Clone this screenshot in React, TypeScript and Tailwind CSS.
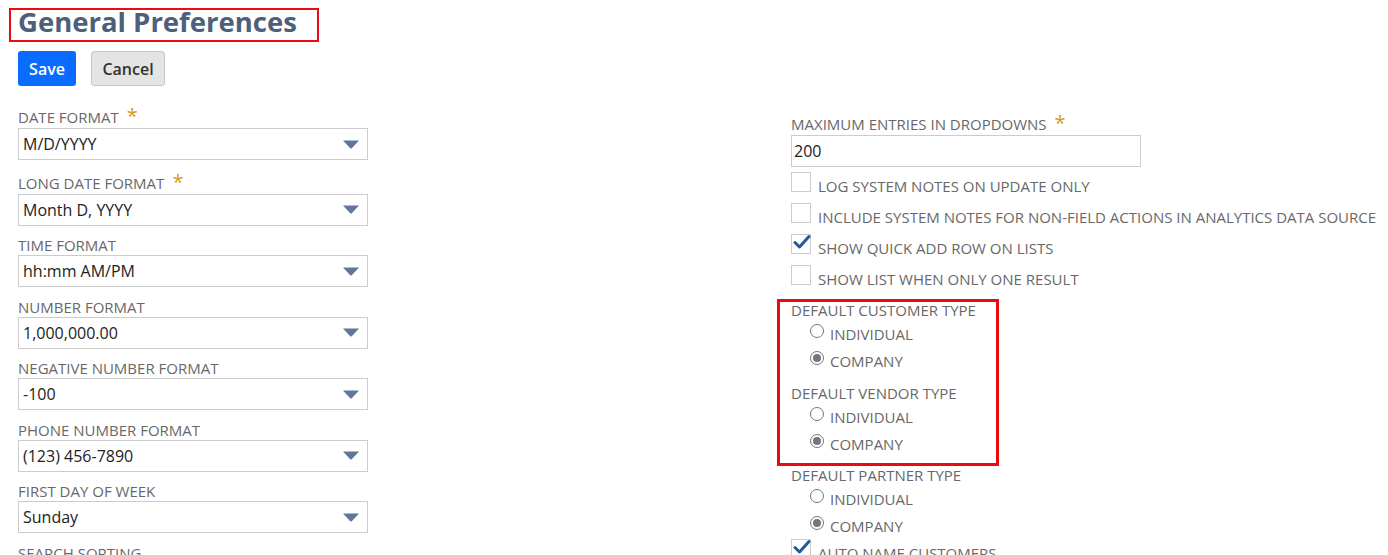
import React from "react";

const leftFields = [
  { label: "DATE FORMAT", value: "M/D/YYYY", required: true },
  { label: "LONG DATE FORMAT", value: "Month D, YYYY", required: true },
  { label: "TIME FORMAT", value: "hh:mm AM/PM" },
  { label: "NUMBER FORMAT", value: "1,000,000.00" },
  { label: "NEGATIVE NUMBER FORMAT", value: "-100" },
  { label: "PHONE NUMBER FORMAT", value: "(123) 456-7890" },
  { label: "FIRST DAY OF WEEK", value: "Sunday" },
];

function Label({ text, required }: { text: string; required?: boolean }) {
  return (
    <div
      className={
        "flex items-start whitespace-nowrap text-[15px] leading-[20px] text-[#686868] " +
        (required ? "h-[24px] pt-[3px]" : "h-[20px]")
      }
    >
      <span>{text}</span>
      {required && (
        <span className="ml-[8px] mt-[-1px] text-[20px] leading-[20px] text-[#d49a1a]">*</span>
      )}
    </div>
  );
}

function SelectField({ label, value, required }: { label: string; value: string; required?: boolean }) {
  return (
    <div className="flex flex-col">
      <Label text={label} required={required} />
      <div className="flex h-[32px] w-[350px] items-center justify-between border border-[#cccccc] bg-white pl-[4px] pr-[8px]">
        <span className="text-[16px] text-[#222222]">{value}</span>
        <svg width="16" height="9" viewBox="0 0 16 9">
          <path d="M0 0.5 H16 L9 8 Q8 9 7 8 Z" fill="#607799" />
        </svg>
      </div>
    </div>
  );
}

function Checkbox({ label, checked }: { label: string; checked?: boolean }) {
  return (
    <div className="flex h-[31px] items-start whitespace-nowrap">
      <div className="relative mt-[5px] h-[20px] w-[20px] shrink-0 border border-[#cccccc] bg-white">
        {checked && (
          <svg className="absolute left-[1px] top-[-1px]" width="18" height="16" viewBox="0 0 18 16">
            <path d="M2 8.5 L6.5 13 L16 2.5" fill="none" stroke="#24599b" strokeWidth="3" strokeLinecap="round" strokeLinejoin="round" />
          </svg>
        )}
      </div>
      <span className="ml-[7px] mt-[9px] text-[15px] leading-[20px] text-[#686868]">{label}</span>
    </div>
  );
}

function Radio({ label, checked, height }: { label: string; checked?: boolean; height: string }) {
  return (
    <div className={"flex items-center pl-[19px] " + height}>
      <div className="mb-[6px] flex h-[14px] w-[14px] items-center justify-center rounded-full border border-[#767676] bg-white">
        {checked && <div className="h-[8px] w-[8px] rounded-full bg-[#767676]" />}
      </div>
      <span className="ml-[6px] text-[15px] leading-[20px] text-[#686868]">{label}</span>
    </div>
  );
}

function RadioGroup({ label }: { label: string }) {
  return (
    <div className="flex flex-col pb-[8.5px]">
      <Label text={label} />
      <Radio label="INDIVIDUAL" height="h-[28px]" />
      <Radio label="COMPANY" checked height="h-[26px]" />
    </div>
  );
}

export default function App() {
  return (
    <div
      className="h-[555px] w-[1388px] overflow-hidden bg-white"
      style={{ fontFamily: '"Open Sans", "Liberation Sans", sans-serif' }}
    >
      <div className="px-[18px]">
        {/* Title */}
        <div className="relative pt-[3px]">
          <h1 className="text-[27.5px] font-bold leading-[38px] text-[#4d5f7a]">General Preferences</h1>
          <div className="pointer-events-none absolute left-[-9px] top-[8px] h-[34px] w-[310px] border-2 border-[#ea0a12]" />
        </div>

        {/* Buttons */}
        <div className="mt-[10px] flex gap-[15px]">
          <button className="h-[35px] w-[58px] rounded-[3px] bg-[#0a6cff] text-[16px] font-semibold text-white">
            Save
          </button>
          <button className="h-[35px] w-[74px] rounded-[3px] border border-[#c8c8c8] bg-[#e4e4e4] text-[16px] font-semibold text-[#333333]">
            Cancel
          </button>
        </div>

        <div className="mt-[18px] flex">
          {/* Left column */}
          <div className="flex w-[773px] shrink-0 flex-col gap-[9.5px]">
            {leftFields.map((f) => (
              <SelectField key={f.label} label={f.label} value={f.value} required={f.required} />
            ))}
            <Label text="SEARCH SORTING" />
          </div>

          {/* Right column */}
          <div className="mt-[7px] flex flex-col">
            <Label text="MAXIMUM ENTRIES IN DROPDOWNS" required />
            <div className="flex h-[32px] w-[350px] items-center border border-[#cccccc] bg-white pl-[2px]">
              <span className="text-[16px] text-[#222222]">200</span>
            </div>
            <div className="flex flex-col">
              <Checkbox label="LOG SYSTEM NOTES ON UPDATE ONLY" />
              <Checkbox label="INCLUDE SYSTEM NOTES FOR NON-FIELD ACTIONS IN ANALYTICS DATA SOURCE" />
              <Checkbox label="SHOW QUICK ADD ROW ON LISTS" checked />
              <Checkbox label="SHOW LIST WHEN ONLY ONE RESULT" />
            </div>
            <div className="relative mt-[9px]">
              <RadioGroup label="DEFAULT CUSTOMER TYPE" />
              <RadioGroup label="DEFAULT VENDOR TYPE" />
              <div className="pointer-events-none absolute left-[-14px] top-[-1px] h-[167px] w-[222px] border-[3px] border-[#ea0a12]" />
            </div>
            <RadioGroup label="DEFAULT PARTNER TYPE" />
            <div className="mt-[-14px]">
              <Checkbox label="AUTO NAME CUSTOMERS" checked />
            </div>
          </div>
        </div>
      </div>
    </div>
  );
}
